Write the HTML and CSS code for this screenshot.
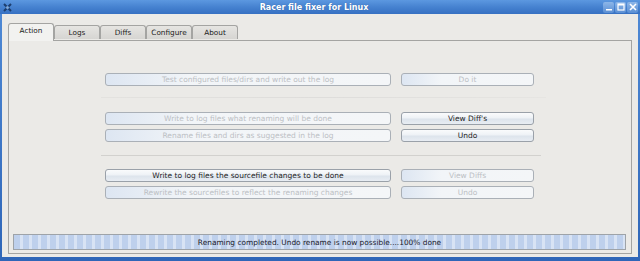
FILE: index.html
```html
<!DOCTYPE html>
<html>
<head>
<meta charset="utf-8">
<link rel="stylesheet" href="styles.css">
</head>
<body>
<div class="window">
  <div class="titlebar">
    <svg class="appicon" width="11" height="11" viewBox="0 0 11 11"><path d="M2 2 L9 9 M9 2 L2 9" stroke="#1c3e6e" stroke-width="2"/><circle cx="5.5" cy="5.5" r="1.5" fill="#7fa8d8"/></svg>
    <div class="title">Racer file fixer for Linux</div>
    <div class="wbtns">
      <span class="wbtn"><svg width="10" height="10" viewBox="0 0 10 10"><rect x="2" y="7" width="6" height="1.5" fill="#fff"/></svg></span>
      <span class="wbtn"><svg width="10" height="10" viewBox="0 0 10 10"><rect x="2" y="2" width="6" height="6" fill="none" stroke="#fff" stroke-width="1.2"/><rect x="2" y="2" width="6" height="1.5" fill="#fff"/></svg></span>
      <span class="wbtn"><svg width="10" height="10" viewBox="0 0 10 10"><path d="M2 2 L8 8 M8 2 L2 8" stroke="#fff" stroke-width="1.6"/></svg></span>
    </div>
  </div>
  <div class="client">
    <div class="tabs">
      <div class="tab active">Action</div>
      <div class="tab">Logs</div>
      <div class="tab">Diffs</div>
      <div class="tab">Configure</div>
      <div class="tab">About</div>
    </div>
    <div class="panel">
      <div class="actions">
        <div class="row r1">
          <button class="btn wide" disabled>Test configured files/dirs and write out the log</button>
          <button class="btn narrow" disabled>Do it</button>
        </div>
        <div class="sep s1"></div>
        <div class="row r2">
          <button class="btn wide" disabled>Write to log files what renaming will be done</button>
          <button class="btn narrow">View Diff's</button>
        </div>
        <div class="row r3">
          <button class="btn wide" disabled>Rename files and dirs as suggested in the log</button>
          <button class="btn narrow">Undo</button>
        </div>
        <div class="sep s2"></div>
        <div class="row r4">
          <button class="btn wide">Write to log files the sourcefile changes to be done</button>
          <button class="btn narrow" disabled>View Diffs</button>
        </div>
        <div class="row r5">
          <button class="btn wide" disabled>Rewrite the sourcefiles to reflect the renaming changes</button>
          <button class="btn narrow" disabled>Undo</button>
        </div>
      </div>
      <div class="status">
        <div class="status-text">Renaming completed. Undo rename is now possible....100% done</div>
      </div>
    </div>
  </div>
</div>
</body>
</html>
```
FILE: styles.css
```css
html, body {
  margin: 0;
  padding: 0;
  width: 640px;
  height: 261px;
  overflow: hidden;
  font-family: "DejaVu Sans", sans-serif;
}
.window {
  width: 640px;
  height: 261px;
  box-sizing: border-box;
  background: linear-gradient(#4f8ad6, #2f66b8);
  display: flex;
  flex-direction: column;
}
.titlebar {
  height: 14px;
  display: flex;
  align-items: center;
  background: linear-gradient(#5c98e0 0%, #4682d0 50%, #3670c2 100%);
}
.appicon {
  margin-left: 2px;
}
.title {
  flex: 1;
  text-align: center;
  color: #fff;
  font-size: 8px;
  font-weight: bold;
  text-shadow: 0 0 1px #2a5a9a;
  margin-left: 12px;
}
.wbtns {
  display: flex;
  gap: 1px;
  margin-right: 2px;
}
.wbtn {
  width: 11px;
  height: 11px;
  display: flex;
  align-items: center;
  justify-content: center;
  background: linear-gradient(#8db6e8, #5a8fd4);
  border-radius: 2px;
}
.client {
  flex: 1;
  margin: 0 2px 4px 2px;
  background: #ebeae7;
  display: flex;
  flex-direction: column;
}
.tabs {
  display: flex;
  align-items: flex-end;
  height: 26px;
  padding-left: 6px;
  box-sizing: border-box;
}
.tab {
  width: 46px;
  height: 14px;
  box-sizing: border-box;
  border: 1px solid #a4a4a2;
  border-bottom: none;
  border-radius: 3px 3px 0 0;
  background: linear-gradient(#e6e5e2, #d6d5d2);
  font-size: 7.3px;
  color: #222;
  text-align: center;
  line-height: 14px;
  margin-bottom: 1px;
}
.tab.active {
  height: 18px;
  background: #f2f2f0;
  line-height: 14px;
  margin-bottom: -1px;
  position: relative;
  z-index: 1;
}
.panel {
  margin: 0 6px 0 6px;
  height: 214px;
  box-sizing: border-box;
  border: 1px solid #a4a4a2;
  background: #ebeae7;
  display: flex;
  flex-direction: column;
}
.actions {
  margin-left: 92px;
  width: 445px;
  display: flex;
  flex-direction: column;
}
.row {
  display: flex;
  gap: 10px;
  padding-left: 4px;
}
.r1 { margin-top: 32px; }
.r2 { margin-top: 14px; }
.r3 { margin-top: 4px; }
.r4 { margin-top: 13px; }
.r5 { margin-top: 4px; }
.sep {
  height: 1px;
}
.s1 {
  margin-top: 11px;
  background: linear-gradient(90deg, #e3e2df, #dedddb 50%, #e6e5e2);
}
.s2 {
  margin-top: 13px;
  background: #d2d1ce;
  width: 440px;
}
.btn {
  height: 13px;
  box-sizing: border-box;
  border: 1px solid #9aa1a9;
  border-radius: 3px;
  background: linear-gradient(#fafbfc 0%, #eef2f6 45%, #dde4ec 55%, #e8edf3 100%);
  font-family: "DejaVu Sans", sans-serif;
  font-size: 7.5px;
  color: #1e1e1e;
  padding: 0;
  line-height: 11px;
  text-align: center;
  white-space: nowrap;
  overflow: hidden;
}
.btn:disabled {
  color: #bcc0c4;
  border-color: #aab0b7;
  background: linear-gradient(90deg, #dde6f2 0%, #f2f5f8 30%, #f4f6f8 100%);
}
.wide { width: 286px; }
.narrow { width: 133px; }
.status {
  margin: auto 5px 3px 4px;
  height: 16px;
  box-sizing: border-box;
  border: 1px solid #9ea3a8;
  background:
    repeating-linear-gradient(90deg, #bed0ec 0px, #bed0ec 6px, #d8e3f4 6px, #d8e3f4 9px),
    #c6d6ee;
  display: flex;
  align-items: center;
  justify-content: center;
}
.status-text {
  font-size: 7.4px;
  color: #1a1a2a;
}
```
